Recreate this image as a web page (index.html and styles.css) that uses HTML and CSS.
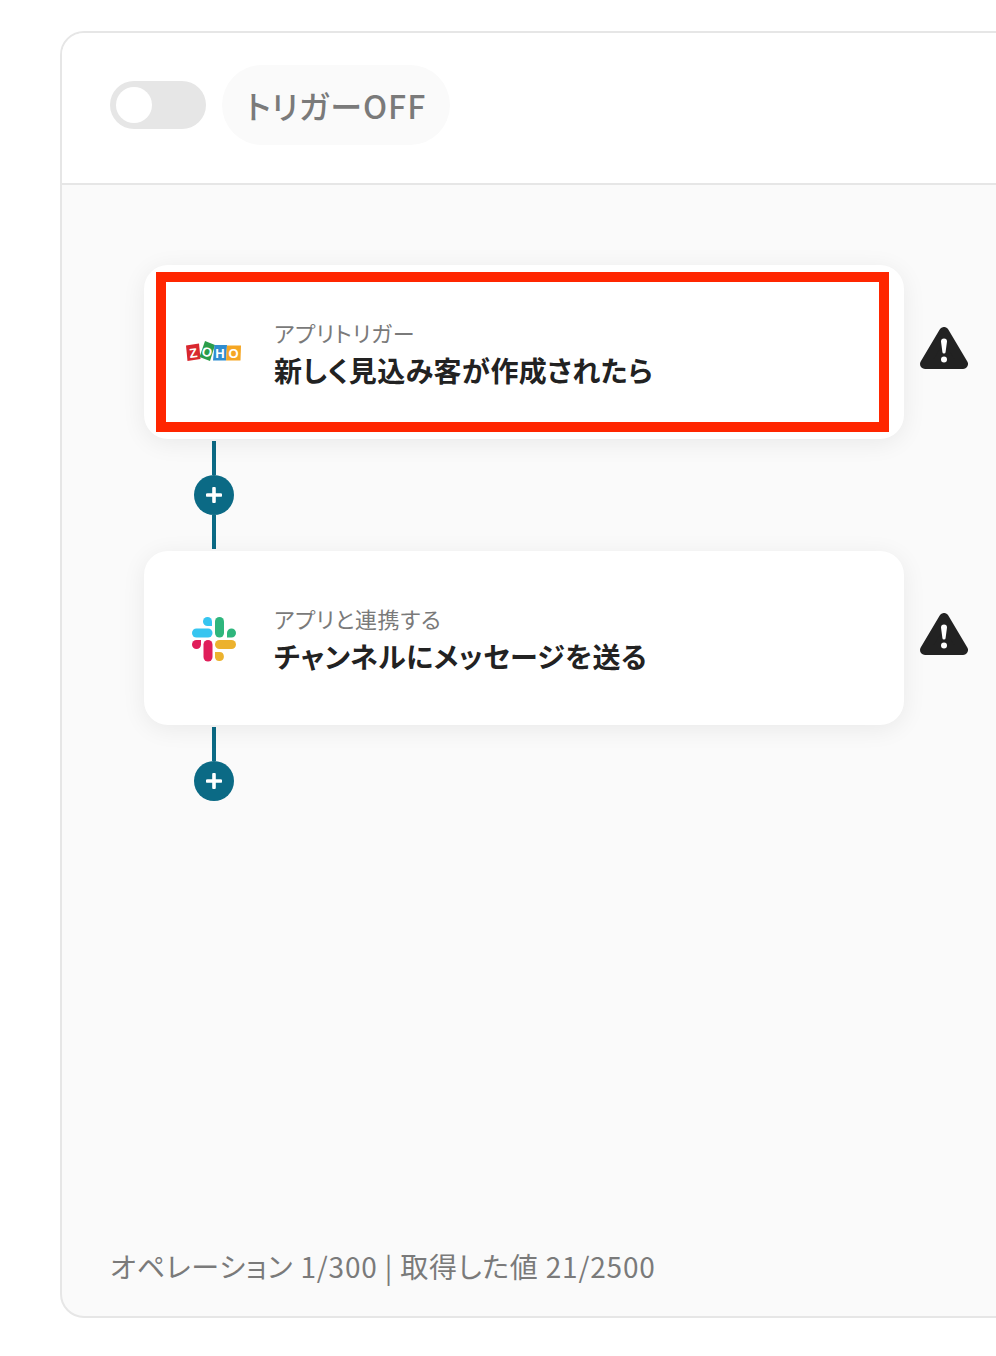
FILE: index.html
```html
<!DOCTYPE html>
<html lang="ja">
<head>
<meta charset="utf-8">
<title>フロー</title>
<link rel="stylesheet" href="styles.css">
</head>
<body>
<main class="panel">
  <header class="panel-head">
    <div class="toggle"><span class="knob"></span></div>
    <div class="status-pill">トリガーOFF</div>
  </header>
  <section class="canvas">
    <div class="step">
      <article class="card">
        <div class="logo">
          <svg width="56" height="24" viewBox="1 0 56 24">
            <polygon points="1,5.5 14,3.5 15.5,19 2.5,21" fill="#d9272e"/>
            <polygon points="20,1 30,5 25,21 14.500,17" fill="#2a9d4a"/>
            <polygon points="29.500,5 42,5 41,20.500 28,20.500" fill="#2f8dd0"/>
            <polygon points="42,5.500 56,5.500 55.500,20.500 41,20.500" fill="#f5a623"/>
            <text class="zoho-l" x="8.300" y="17.500" transform="rotate(-8 8 13)">Z</text>
            <text class="zoho-l" x="22" y="16.500" transform="rotate(18 22 12)">O</text>
            <text class="zoho-l" x="35" y="17.500">H</text>
            <text class="zoho-l" x="48.500" y="17.500">O</text>
          </svg>
        </div>
        <div class="card-text">
          <p class="card-label">アプリトリガー</p>
          <p class="card-title">新しく見込み客が作成されたら</p>
        </div>
        <div class="highlight"></div>
      </article>
      <svg class="warn" width="48" height="42" viewBox="0 0 48 42">
        <path d="M24 5 L43 37 H5 Z" fill="#222" stroke="#222" stroke-width="10" stroke-linejoin="round"/>
        <path d="M21 14.500a3 3 0 0 1 6 0L25.600 25a1.600 1.600 0 0 1-3.200 0z" fill="#fff"/>
        <circle cx="24" cy="32.500" r="3" fill="#fff"/>
      </svg>
    </div>
    <div class="connector">
      <span class="line"></span>
      <span class="add"><svg width="16" height="16" viewBox="0 0 16 16"><path d="M8 1.500V14.500M1.500 8H14.500" stroke="#fff" stroke-width="3.600" stroke-linecap="round"/></svg></span>
      <span class="line"></span>
    </div>
    <div class="step">
      <article class="card">
        <div class="logo logo-slack">
          <svg width="44" height="45" viewBox="0 0 44 45">
            <path d="M4.500 16H16" stroke="#36c5f0" stroke-width="9" stroke-linecap="round"/>
            <path d="M15.500 0a4.500 4.500 0 0 0 0 9H20V4.500A4.500 4.500 0 0 0 15.500 0z" fill="#36c5f0"/>
            <path d="M27.500 4.500V16" stroke="#2eb67d" stroke-width="9" stroke-linecap="round"/>
            <path d="M39.500 11.500a4.500 4.500 0 0 0-4.500 4.500v4.500h4.500a4.500 4.500 0 0 0 0-9z" fill="#2eb67d"/>
            <path d="M4.500 23a4.500 4.500 0 0 0 0 9A4.500 4.500 0 0 0 9 27.500V23z" fill="#e01e5a"/>
            <path d="M16 27.500V40" stroke="#e01e5a" stroke-width="9" stroke-linecap="round"/>
            <path d="M27.500 27.500H39.500" stroke="#ecb22e" stroke-width="9" stroke-linecap="round"/>
            <path d="M23 35v5.500a4.500 4.500 0 1 0 4.500-5.500z" fill="#ecb22e"/>
          </svg>
        </div>
        <div class="card-text">
          <p class="card-label">アプリと連携する</p>
          <p class="card-title">チャンネルにメッセージを送る</p>
        </div>
      </article>
      <svg class="warn" width="48" height="42" viewBox="0 0 48 42">
        <path d="M24 5 L43 37 H5 Z" fill="#222" stroke="#222" stroke-width="10" stroke-linejoin="round"/>
        <path d="M21 14.500a3 3 0 0 1 6 0L25.600 25a1.600 1.600 0 0 1-3.200 0z" fill="#fff"/>
        <circle cx="24" cy="32.500" r="3" fill="#fff"/>
      </svg>
    </div>
    <div class="connector">
      <span class="line"></span>
      <span class="add"><svg width="16" height="16" viewBox="0 0 16 16"><path d="M8 1.500V14.500M1.500 8H14.500" stroke="#fff" stroke-width="3.600" stroke-linecap="round"/></svg></span>
    </div>
    <p class="usage">オペレーション 1/300 | 取得した値 21/2500</p>
  </section>
</main>
</body>
</html>
```
FILE: styles.css
```css
* { box-sizing: border-box; }
html, body { margin: 0; height: 1356px; overflow: hidden; background: #fff; }
body { font-family: "Noto Sans CJK JP", "Noto Sans", sans-serif; color: #222; font-feature-settings: "palt"; }
p { margin: 0; }

.panel {
  width: 1040px;
  height: 1287px;
  margin: 31px 0 0 60px;
  border: 2px solid #e6e6e6;
  border-radius: 24px;
  display: flex;
  flex-direction: column;
  overflow: hidden;
  background: #fafafa;
}

.panel-head {
  height: 152px;
  flex: none;
  padding: 0 0 6px 48px;
  display: flex;
  align-items: center;
  gap: 16px;
  background: #fff;
  border-bottom: 2px solid #e6e6e6;
}

.toggle {
  width: 96px;
  height: 48px;
  padding: 6px;
  border-radius: 24px;
  background: #e6e6e6;
}
.knob { display: block; width: 36px; height: 36px; border-radius: 50%; background: #fff; }

.status-pill {
  height: 80px;
  padding: 0 24px;
  border-radius: 40px;
  background: #fafafa;
  color: #7a7a7a;
  font-size: 32px;
  font-weight: 500;
  line-height: 80px;
  letter-spacing: 1px;
}

.canvas {
  flex: 1;
  display: flex;
  flex-direction: column;
  padding: 80px 0 30px 82px;
}

.step { display: flex; align-items: center; gap: 16px; }

.card {
  position: relative;
  width: 760px;
  height: 174px;
  flex: none;
  padding-left: 42px;
  display: flex;
  align-items: center;
  gap: 32px;
  border-radius: 24px;
  background: #fff;
  box-shadow: 0 4px 24px rgba(0, 0, 0, 0.07);
}

.logo { width: 56px; flex: none; display: flex; justify-content: center; }
.logo svg { display: block; }
.logo-slack { margin-top: 2px; }
.zoho-l { fill: #fff; font: 700 13px "Liberation Sans", sans-serif; text-anchor: middle; }

.card-text { display: flex; flex-direction: column; gap: 2px; padding-top: 2px; }
.card-label { font-size: 22px; line-height: 32px; color: #7a7a7a; letter-spacing: 0.7px; }
.card-title { font-size: 28px; line-height: 40px; font-weight: 700; color: #222; letter-spacing: 0.45px; }

.highlight {
  position: absolute;
  top: 7px;
  left: 12px;
  right: 15px;
  bottom: 7px;
  border: 10px solid #ff2600;
}

.warn { flex: none; margin-bottom: 8px; }

.connector {
  width: 40px;
  margin: 2px 0 2px 50px;
  display: flex;
  flex-direction: column;
  align-items: center;
}
.line { display: block; width: 4px; height: 34px; background: #0b6a85; }
.add {
  width: 40px;
  height: 40px;
  border-radius: 50%;
  background: #0b6a85;
  display: flex;
  align-items: center;
  justify-content: center;
}

.usage {
  margin: auto 0 0 -34px;
  font-size: 28px;
  line-height: 40px;
  color: #7a7a7a;
  letter-spacing: 0.82px;
}
```
